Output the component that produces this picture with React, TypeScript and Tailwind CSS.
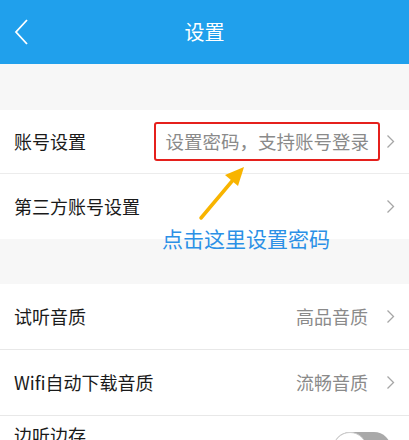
import { ReactNode } from 'react';

const cjk = { fontFamily: '"Noto Sans CJK SC", "Noto Sans", sans-serif' };

function Chevron() {
  return (
    <svg width="9" height="15" viewBox="0 0 9 15" className="shrink-0">
      <path d="M1.5 1.5 L7.5 7.5 L1.5 13.5" fill="none" stroke="#a6a6a6" strokeWidth="1.3" />
    </svg>
  );
}

function Row({ label, value }: { label: string; value?: ReactNode }) {
  return (
    <div className="flex h-[66px] items-center border-b border-[#e8e8e8] bg-white pl-[14px] pr-[14px]">
      <span className="flex-1 text-[18px] text-[#1a1a1a]">{label}</span>
      {value && <span className="text-[18px] text-[#8a8a8a]">{value}</span>}
      <span className={value ? 'ml-[18px]' : ''}><Chevron /></span>
    </div>
  );
}

export default function App() {
  return (
    <div className="relative h-[440px] w-[409px] overflow-hidden bg-[#f7f7f7]" style={cjk}>
      <header className="relative flex h-16 items-center justify-center bg-[#20a0ec]">
        <svg width="16" height="28" viewBox="0 0 16 28" className="absolute left-[13px] top-[18px]">
          <path d="M14 2 L3 14 L14 26" fill="none" stroke="#fff" strokeWidth="1.8" />
        </svg>
        <h1 className="text-[20px] text-white">设置</h1>
      </header>

      <div className="h-[46px]" />

      <div className="flex h-[64px] items-center border-b border-[#ececec] bg-white pl-[14px] pr-[14px]">
        <span className="flex-1 text-[18px] text-[#1a1a1a]">账号设置</span>
        <span className="rounded-[3px] border-2 border-[#e5201c] px-[9px] py-[4px] text-[18.5px] leading-[27px] text-[#8a8a8a]">
          设置密码，支持账号登录
        </span>
        <span className="ml-[6px]"><Chevron /></span>
      </div>
      <div className="flex h-[65px] items-center bg-white pl-[14px] pr-[14px]">
        <span className="flex-1 text-[18px] text-[#1a1a1a]">第三方账号设置</span>
        <Chevron />
      </div>

      <div className="h-[45px]" />

      <Row label="试听音质" value="高品音质" />
      <Row label="Wifi自动下载音质" value="流畅音质" />
      <div className="flex h-[66px] items-start justify-between bg-white pl-[14px] pr-[18px] pt-[6px]">
        <span className="text-[18px] leading-[27px] text-[#1a1a1a]">边听边存</span>
        <div className="relative mt-[10px] h-[34px] w-[58px] rounded-full bg-[#a9a9a9]">
          <div className="absolute left-0 top-0 h-[34px] w-[34px] rounded-full border border-[#cfcfcf] bg-white" />
        </div>
      </div>

      <svg width="60" height="60" viewBox="0 0 60 60" className="absolute left-[193px] top-[163px]">
        <path d="M8 55 L40 17" stroke="#f8b400" strokeWidth="3.5" strokeLinecap="round" />
        <path d="M51 4 L32 12 L45 23 Z" fill="#f8b400" />
      </svg>
      <span className="absolute left-[162px] top-[224px] text-[21px] leading-[28px] text-[#2b90e6]">点击这里设置密码</span>
    </div>
  );
}
